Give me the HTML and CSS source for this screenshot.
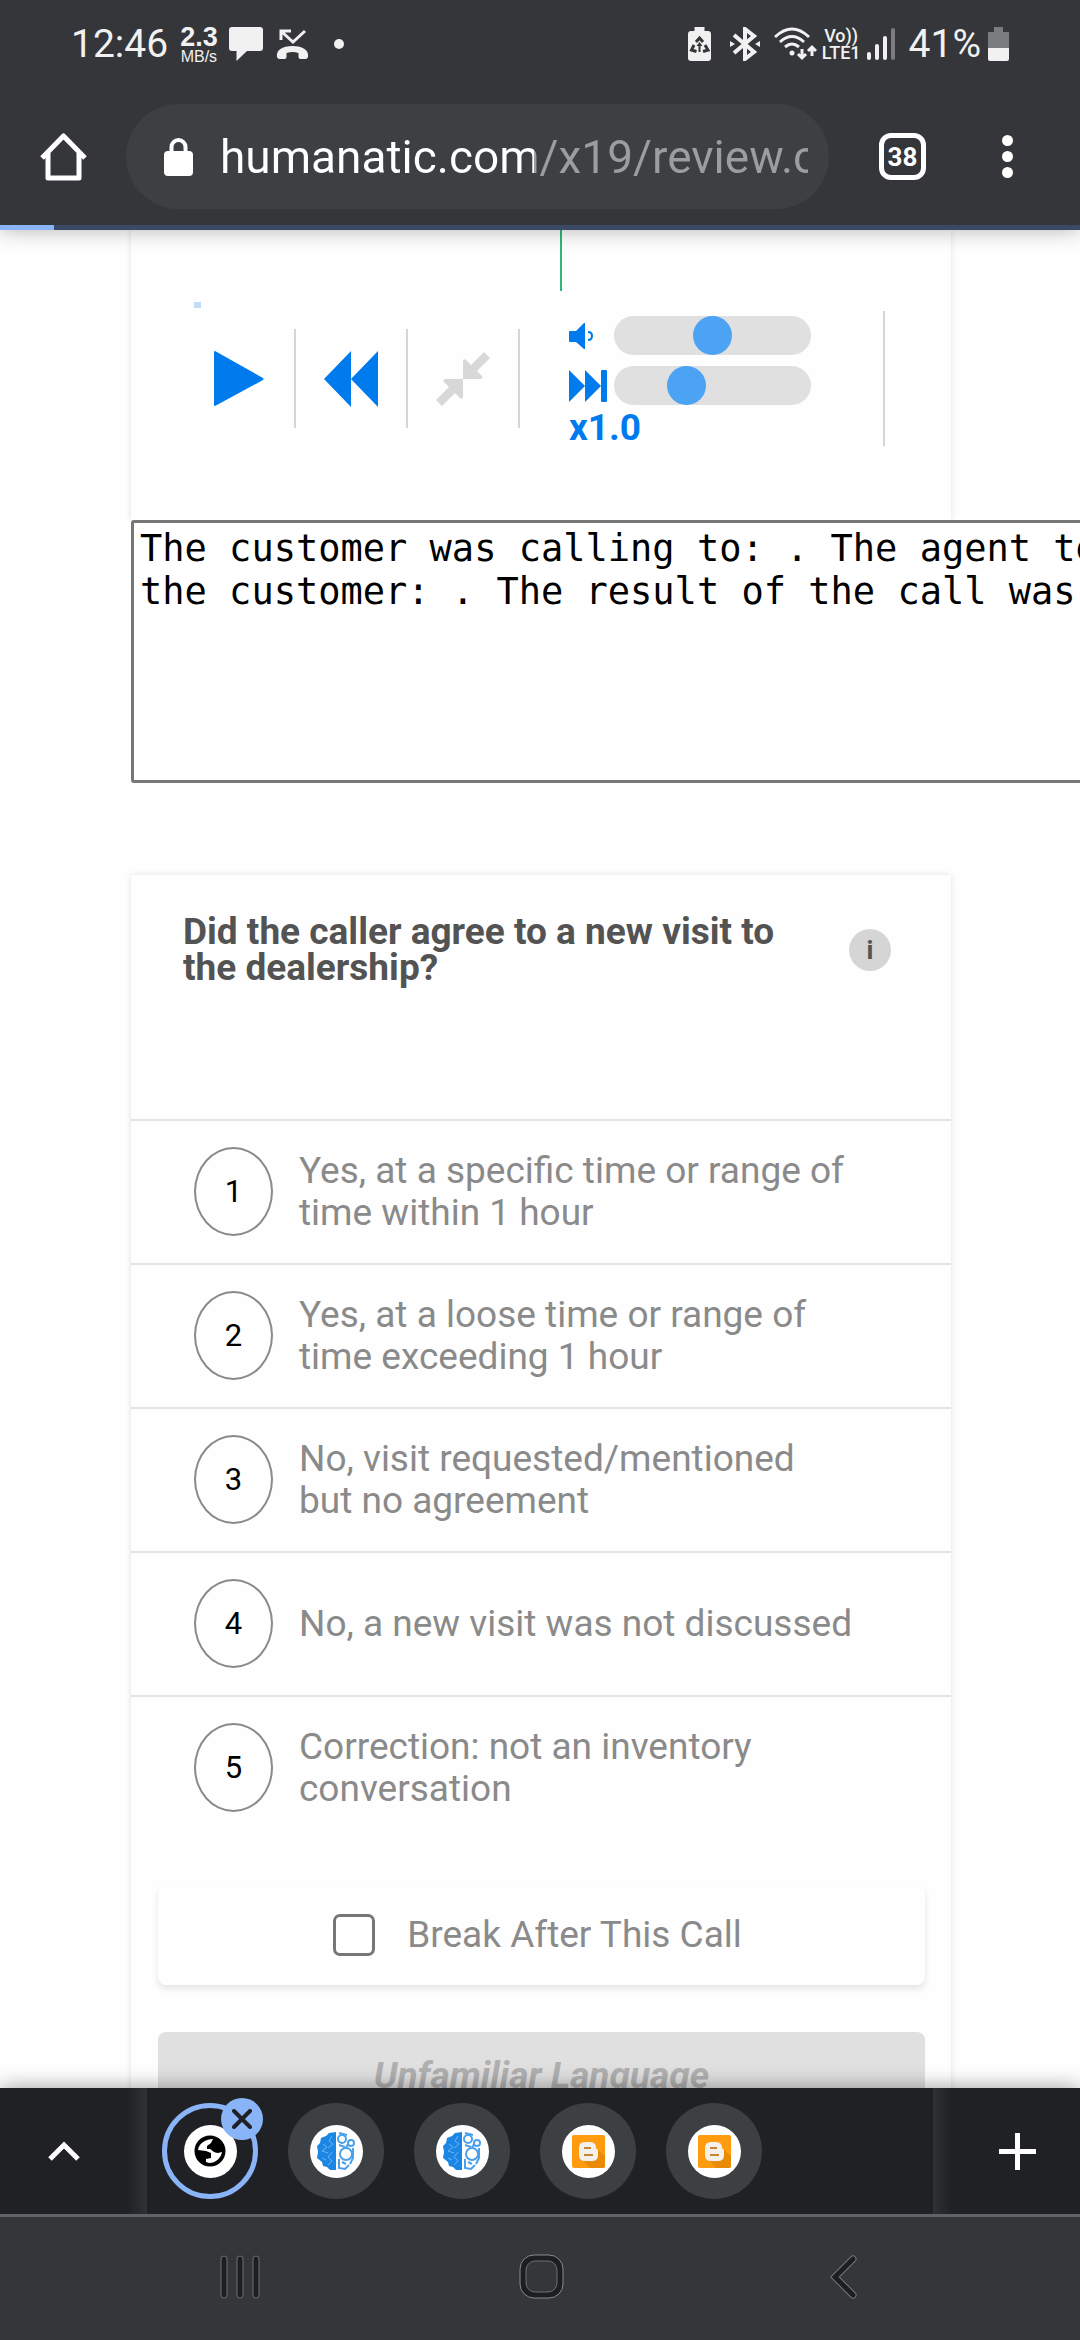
FILE: index.html
```html
<!DOCTYPE html>
<html lang="en">
<head>
  <meta charset="UTF-8" />
  <meta name="viewport" content="width=device-width, initial-scale=1.0"/>
  <title>Review - Humanatic</title>
  <link rel="stylesheet" href="styles.css">
</head>
<body>
  <header class="browser-top">
    <!-- Status bar -->
    <div class="status-bar">
      <span class="clock">12:46</span>
      <span class="net-speed"><b>2.3</b><span>MB/s</span></span>
      <svg class="icon-message" width="34" height="34" viewBox="0 0 34 34"><path fill="#f1f1f1" d="M3 0h28q3 0 3 3v18q0 3-3 3H18L7.500 34V24H3q-3 0-3-3V3q0-3 3-3z"/></svg>
      <svg class="icon-missed" width="33" height="32" viewBox="0 0 33 32"><path fill="none" stroke="#f1f1f1" stroke-width="3" d="M5 12V3h10M6 4l11 10L29 3"/><path fill="#f1f1f1" d="M1 29c-1-7 5-11 15.500-11S33 22 32 29q-.5 2-2.500 2h-5q-2 0-2-2v-4q-6-2-12 0v4q0 2-2 2h-5Q1.500 31 1 29z"/></svg>
      <span class="more-dot"></span>

      <span class="spacer"></span>

      <svg class="icon-saver" width="23" height="34" viewBox="0 0 23 34"><path fill="#f1f1f1" d="M6.500 0h10v4H20q3 0 3 3v24q0 3-3 3H3q-3 0-3-3V7q0-3 3-3h3.500z"/><g fill="none" stroke="#35363a" stroke-width="3"><path d="M8 15l3.500-4 3.500 4M17 18l3 5-5 1.500M6 18l-2.500 5 5 1.500"/></g><path fill="#35363a" d="M11.500 15l3 4h-2v6h-2v-6h-2z"/></svg>
      <svg class="icon-bluetooth" width="30" height="34" viewBox="0 0 30 34"><g fill="none" stroke="#f1f1f1" stroke-width="4"><path d="M4 8l20 17-9 7V2l9 7L4 26"/></g><path fill="#f1f1f1" d="M0 14l5 3-5 3zM30 14l-5 3 5 3z"/></svg>
      <svg class="icon-wifi" width="43" height="34" viewBox="0 0 43 34"><g fill="none" stroke="#f1f1f1" stroke-width="3"><path d="M1 10Q18-6 35 10M6 15q12-11 24 0M11 20q7-6 14 0"/><path d="M28 22v9M24 27l4 4 4-4M38 29v-9M34 24l4-4 4 4"/></g><circle cx="18" cy="26" r="2.500" fill="#f1f1f1"/></svg>
      <span class="volte"><span>Vo))</span><span>LTE1</span></span>
      <svg class="icon-signal" width="28" height="32" viewBox="0 0 28 32"><g fill="#f1f1f1"><rect y="24" width="4" height="8" rx="2"/><rect x="8" y="16" width="4" height="16" rx="2"/><rect x="16" y="8" width="4" height="24" rx="2"/></g><rect x="24" width="4" height="32" rx="2" fill="#7d7d80"/></svg>
      <span class="battery-level">41%</span>
      <svg class="icon-battery" width="21" height="34" viewBox="0 0 21 34"><path fill="#7b7c7f" d="M6 0h9v5h6v16H0V5h6z"/><path fill="#f1f1f1" d="M0 21h21v11q0 2-2 2H2q-2 0-2-2z"/></svg>
    </div>

    <!-- Address bar -->
    <div class="toolbar">
      <button type="button" class="home-btn" aria-label="Home">
        <svg width="47" height="48" viewBox="0 0 47 48"><path fill="none" stroke="#fff" stroke-width="5" stroke-linejoin="round" d="M2 25L23.500 3 45 25M8 20v25h31V20"/></svg>
      </button>
      <div class="omnibox">
        <svg width="29" height="38" viewBox="0 0 29 38"><rect y="13" width="29" height="25" rx="4" fill="#fff"/><path fill="none" stroke="#fff" stroke-width="4" d="M7.500 14V9a7 7 0 0 1 14 0v5"/></svg>
        <input type="text" class="address" aria-label="Address" value="humanatic.com/x19/review.cfm">
      </div>
      <button type="button" class="tab-count" aria-label="Open tabs">38</button>
      <button type="button" class="menu-btn" aria-label="Menu"><span></span><span></span><span></span></button>
    </div>
    <div class="load-bar"><div class="load-bar-fill"></div></div>
  </header>

  <main>
    <section class="player">
      <div class="waveform">
        <div class="cursor"></div>
        <div class="region"></div>
      </div>
      <div class="controls">
        <button type="button" class="control-btn" aria-label="Play">
          <svg width="50" height="56" viewBox="0 0 50 56"><path fill="#007bee" d="M0 1Q0 0 1 0l48 27q1 1 0 2L1 55q-1 0-1-1z"/></svg>
        </button>
        <button type="button" class="control-btn" aria-label="Rewind">
          <svg width="54" height="56" viewBox="0 0 54 56"><path fill="#007bee" d="M0 28L27 0v28L54 0v56L27 28v28z"/></svg>
        </button>
        <button type="button" class="control-btn" aria-label="Compress">
          <svg width="54" height="54" viewBox="0 0 54 54"><path fill="#d8d8d8" d="M27 27V10q0-4 3-2l5 5L48 0l6 6-13 13 5 5q2 3-2 3zM27 27v17q0 4-3 2l-5-5L6 54l-6-6 13-13-5-5q-2-3 2-3z"/></svg>
        </button>
        <div class="sliders">
          <label for="volume" aria-label="Volume"><svg width="25" height="26" viewBox="0 0 25 26"><path fill="#007bee" d="M0 9q0-1 1-1h6l8-8h1v26h-1l-8-7H1q-1 0-1-1z"/><path fill="none" stroke="#007bee" stroke-width="2" d="M19 9q4 0 4 4t-4 4"/></svg></label>
          <input type="range" id="volume" min="0" max="100" value="50">
          <label for="speed" aria-label="Speed"><svg width="38" height="32" viewBox="0 0 38 32"><path fill="#007bee" d="M0 0l16 16V0l16 16V1q0-1 1-1h4q1 0 1 1v30q0 1-1 1h-4q-1 0-1-1V16L16 32V16L0 32z"/></svg></label>
          <input type="range" id="speed" min="0.5" max="2" step="0.1" value="1">
          <output for="speed">x1.0</output>
        </div>
      </div>
    </section>

    <textarea class="summary" cols="48" aria-label="Call summary" wrap="off" spellcheck="false">The customer was calling to: . The agent tells
the customer: . The result of the call was: .</textarea>

    <section class="question">
      <div class="question-head">
        <h1>Did the caller agree to a new visit to the dealership?</h1>
        <button type="button" class="info-btn">i</button>
      </div>
      <button type="button" class="option"><span class="number">1</span><span class="answer">Yes, at a specific time or range of time within 1 hour</span></button>
      <button type="button" class="option"><span class="number">2</span><span class="answer">Yes, at a loose time or range of time exceeding 1 hour</span></button>
      <button type="button" class="option"><span class="number">3</span><span class="answer">No, visit requested/mentioned but no agreement</span></button>
      <button type="button" class="option"><span class="number">4</span><span class="answer">No, a new visit was not discussed</span></button>
      <button type="button" class="option"><span class="number">5</span><span class="answer">Correction: not an inventory conversation</span></button>

      <div class="break-box">
        <input type="checkbox" id="breakAfter">
        <label for="breakAfter">Break After This Call</label>
      </div>
      <button type="button" class="language-btn">Unfamiliar Language</button>
    </section>
  </main>

  <footer class="browser-bottom">
    <!-- Tab strip -->
    <div class="tab-strip">
      <button type="button" class="strip-btn expand" aria-label="Expand">
        <svg width="32" height="20" viewBox="0 0 32 20"><path fill="none" stroke="#fff" stroke-width="5" d="M2 18L16 4l14 14"/></svg>
      </button>
      <div class="tabs">
        <button type="button" class="tab active" aria-label="Current tab">
          <span class="favicon"><svg width="32" height="32" viewBox="-16 -16 32 32"><circle r="15.500"/><path fill="#fff" d="M3-12L1-8l-4 3v3h3c2 1 4 4 8 4l4-1C11 7 6 12-1 12l-3-1V8l5-1V2l-5-2-8-1C-11-8-4-12 3-12z"/></svg></span>
          <span class="close"><svg width="20" height="20" viewBox="0 0 20 20"><path stroke="#202124" stroke-width="4" stroke-linecap="round" d="M2 2l16 16M18 2L2 18"/></svg></span>
        </button>
        <button type="button" class="tab" aria-label="Humanatic tab">
          <span class="favicon"><svg width="38" height="38" viewBox="0 0 38 38"><path fill="#1c86e5" d="M19 0v38h-6l-3-3-4-1-1-4-5-4 1-6-1-6 3-3 1-5 5-2 3-3z"/><g fill="none" stroke="#6db3f2" stroke-width="1"><path d="M15 4l-3 5 4 3-5 4M6 12l4 3-5 4 6 2M15 20l-4 5 4 4-4 4M5 26l4 2"/></g><g fill="none" stroke="#4ba0ec" stroke-width="2"><circle cx="25" cy="7" r="4"/><circle cx="34" cy="11" r="3"/><circle cx="29" cy="22" r="6"/><path d="M22 1l8 2M22 13l6 2M31 12l-2 4M36 16v10l-3 6M22 27v9l6 1 4-4M25 30l4 2"/></g></svg></span>
        </button>
        <button type="button" class="tab" aria-label="Humanatic tab">
          <span class="favicon"><svg width="38" height="38" viewBox="0 0 38 38"><path fill="#1c86e5" d="M19 0v38h-6l-3-3-4-1-1-4-5-4 1-6-1-6 3-3 1-5 5-2 3-3z"/><g fill="none" stroke="#6db3f2" stroke-width="1"><path d="M15 4l-3 5 4 3-5 4M6 12l4 3-5 4 6 2M15 20l-4 5 4 4-4 4M5 26l4 2"/></g><g fill="none" stroke="#4ba0ec" stroke-width="2"><circle cx="25" cy="7" r="4"/><circle cx="34" cy="11" r="3"/><circle cx="29" cy="22" r="6"/><path d="M22 1l8 2M22 13l6 2M31 12l-2 4M36 16v10l-3 6M22 27v9l6 1 4-4M25 30l4 2"/></g></svg></span>
        </button>
        <button type="button" class="tab" aria-label="Blogger tab">
          <span class="favicon"><svg width="33" height="33" viewBox="0 0 33 33"><rect width="33" height="33" rx="2" fill="#ff9b0f"/><path fill="#e98b06" d="M12 26l6 7h13q2 0 2-2V21l-8-7z"/><path fill="#f4f1ec" d="M13 7h5q6 0 6 6 0 1 1 1 1 0 1 2v4q0 6-6 6h-7q-6 0-6-6v-7q0-6 6-6z"/><path stroke="#c98532" stroke-width="2" d="M12 13h7M12 20h9"/></svg></span>
        </button>
        <button type="button" class="tab" aria-label="Blogger tab">
          <span class="favicon"><svg width="33" height="33" viewBox="0 0 33 33"><rect width="33" height="33" rx="2" fill="#ff9b0f"/><path fill="#e98b06" d="M12 26l6 7h13q2 0 2-2V21l-8-7z"/><path fill="#f4f1ec" d="M13 7h5q6 0 6 6 0 1 1 1 1 0 1 2v4q0 6-6 6h-7q-6 0-6-6v-7q0-6 6-6z"/><path stroke="#c98532" stroke-width="2" d="M12 13h7M12 20h9"/></svg></span>
        </button>
      </div>
      <button type="button" class="strip-btn add" aria-label="New tab">
        <svg width="37" height="37" viewBox="0 0 37 37"><path stroke="#fff" stroke-width="5" d="M0 18.500h37M18.500 0v37"/></svg>
      </button>
    </div>

    <!-- System navigation -->
    <nav class="system-nav">
      <button type="button" aria-label="Recents"><svg width="40" height="44" viewBox="0 0 40 44"><g fill="#1d1e20" stroke="#6d6e71"><rect x="1" y="1" width="6" height="42" rx="3"/><rect x="17" y="1" width="6" height="42" rx="3"/><rect x="33" y="1" width="6" height="42" rx="3"/></g></svg></button>
      <button type="button" aria-label="Home"><svg width="45" height="45" viewBox="0 0 45 45"><rect x="1" y="1" width="43" height="43" rx="14" fill="#1d1e20" stroke="#8a8b8d"/><rect x="7" y="7" width="31" height="31" rx="9" fill="#35363a" stroke="#6d6e71"/></svg></button>
      <button type="button" aria-label="Back"><svg width="28" height="44" viewBox="0 0 28 44"><g fill="none" stroke-linecap="round"><path stroke="#77787b" stroke-width="7" d="M23 4L5 22l18 18"/><path stroke="#1d1e20" stroke-width="5" d="M23 4L5 22l18 18"/></g></svg></button>
    </nav>
  </footer>
</body>
</html>
```
FILE: styles.css
```css
* { box-sizing: border-box; }
body {
  margin: 0;
  font-family: Roboto, sans-serif;
  background: #fefefe;
  display: flex;
  flex-direction: column;
  height: 100vh;
  overflow: hidden;
}
button {
  padding: 0;
  border: none;
  background: none;
  font-family: inherit;
  color: inherit;
  cursor: pointer;
}
svg { display: block; }

/* Browser top */
.browser-top {
  position: relative;
  z-index: 1;
  background: #35363a;
  box-shadow: 0 0 20px rgba(0,0,0,0.3);
}
.status-bar {
  display: flex;
  align-items: center;
  height: 88px;
  padding: 0 71px;
  color: #f1f1f1;
  white-space: nowrap;
}
.clock, .battery-level { font-size: 39px; }
.net-speed {
  display: flex;
  flex-direction: column;
  align-items: center;
  margin: 0 11px 0 12px;
  font-family: "Liberation Sans", sans-serif;
  font-size: 16px;
  line-height: 15px;
}
.net-speed b {
  font-size: 27px;
  line-height: 24px;
}
.icon-missed { margin-left: 13px; }
.more-dot {
  width: 10px;
  height: 10px;
  margin-left: 25px;
  border-radius: 50%;
  background: #f1f1f1;
}
.spacer { flex: 1; }
.icon-bluetooth { margin-left: 19px; }
.icon-wifi { margin-left: 14px; }
.volte {
  display: flex;
  flex-direction: column;
  align-items: center;
  margin: 0 6px 0 5px;
  font-size: 18px;
  font-weight: 500;
  line-height: 17px;
}
.battery-level { margin: 0 7px 0 14px; }

.toolbar {
  display: flex;
  align-items: center;
  padding: 16px 67px 16px 40px;
}
.omnibox {
  flex: 1;
  display: flex;
  align-items: center;
  min-width: 0;
  height: 105px;
  margin: 0 50px 0 39px;
  padding: 0 21px 0 38px;
  border-radius: 53px;
  background: #3c4043;
}
.address {
  flex: 1;
  min-width: 0;
  margin-left: 27px;
  padding: 0;
  border: none;
  outline: none;
  font-family: inherit;
  font-size: 46px;
  /* host in white, path in grey */
  color: transparent;
  background: linear-gradient(90deg, #fff 314px, #9b9d9f 314px);
  -webkit-background-clip: text;
  background-clip: text;
}
.tab-count {
  width: 47px;
  height: 47px;
  border: 5px solid #fff;
  border-radius: 12px;
  color: #fff;
  font-size: 26px;
  font-weight: bold;
}
.menu-btn {
  display: flex;
  flex-direction: column;
  gap: 5px;
  margin-left: 76px;
}
.menu-btn span {
  width: 11px;
  height: 11px;
  border-radius: 50%;
  background: #fff;
}
.load-bar {
  height: 5px;
  background: #3a4964;
}
.load-bar-fill {
  width: 5%;
  height: 5px;
  background: #8ab4f8;
}

/* Page */
main {
  flex: 1;
  min-height: 0;
  overflow: hidden;
  padding: 0 129px 0 131px;
}
.player, .question {
  background: #fefefe;
  box-shadow: 0 0 6px rgba(0,0,0,0.12);
}
.player { padding-bottom: 74px; }
.waveform {
  position: relative;
  height: 81px;
}
.cursor {
  position: absolute;
  left: 429px;
  top: 0;
  width: 2px;
  height: 61px;
  background: #2fb875;
}
.region {
  position: absolute;
  left: 63px;
  top: 72px;
  width: 7px;
  height: 6px;
  background: #c1ddf8;
}
.controls {
  display: flex;
  align-items: center;
  padding-left: 53px;
}
.control-btn {
  display: flex;
  align-items: center;
  justify-content: center;
  width: 112px;
  height: 99px;
  border-right: 2px solid #d5d5d5;
}
.sliders {
  display: grid;
  grid-template-columns: 45px 197px;
  row-gap: 11px;
  align-items: center;
  padding: 5px 72px 0 49px;
  border-right: 2px solid #d5d5d5;
}
.sliders input {
  -webkit-appearance: none;
  appearance: none;
  width: 100%;
  height: 39px;
  margin: 0;
  border-radius: 20px;
  background: #e0e0e0;
}
.sliders input::-webkit-slider-thumb {
  -webkit-appearance: none;
  width: 39px;
  height: 39px;
  border-radius: 50%;
  background: #4da3f3;
}
.sliders output {
  grid-column: 1 / 3;
  margin-top: -6px;
  font-size: 37px;
  font-weight: bold;
  line-height: 36px;
  color: #007bee;
}
.summary {
  display: block;
  position: relative;
  height: 263px;
  padding: 4px 6px;
  border: 3px solid #767676;
  border-radius: 3px;
  background: #fff;
  color: #000;
  font-family: "DejaVu Sans Mono", monospace;
  font-size: 37px;
  line-height: 43px;
  resize: none;
  overflow: hidden;
}

/* Question card */
.question {
  margin-top: 92px;
  padding-bottom: 47px;
}
.question-head {
  display: flex;
  align-items: center;
  justify-content: space-between;
  gap: 50px;
  padding: 39px 60px 133px 52px;
}
h1 {
  margin: 0;
  font-size: 37px;
  line-height: 36px;
  color: #535353;
}
.info-btn {
  flex: none;
  width: 42px;
  height: 42px;
  border-radius: 50%;
  background: #d5d5d5;
  color: #535353;
  font-size: 26px;
  font-weight: bold;
}
.option {
  display: flex;
  align-items: center;
  gap: 26px;
  width: 100%;
  min-height: 144px;
  padding: 0 97px 1px 63px;
  border-top: 2px solid #e4e4e4;
  text-align: left;
}
.number {
  flex: none;
  width: 79px;
  border: 2px solid #8a8a8a;
  border-radius: 50%;
  font-size: 31px;
  line-height: 85px;
  text-align: center;
  color: #000;
}
.answer, .break-box label {
  font-size: 37px;
  line-height: 42px;
  color: #8a8a8a;
}
.break-box {
  display: flex;
  align-items: center;
  justify-content: center;
  gap: 32px;
  height: 100px;
  margin: 46px 26px 47px 27px;
  padding-right: 8px;
  border-radius: 8px;
  box-shadow: 0 4px 6px rgba(0,0,0,0.1);
}
.break-box input {
  -webkit-appearance: none;
  appearance: none;
  width: 42px;
  height: 42px;
  margin: 0;
  border: 3px solid #767676;
  border-radius: 7px;
  background: #fff;
}
.language-btn {
  display: block;
  width: calc(100% - 53px);
  margin: 0 26px 0 27px;
  padding: 26px;
  border-radius: 8px;
  background: #e0e0e0;
  color: #b0b0b0;
  font-size: 37px;
  font-style: italic;
  font-weight: bold;
  line-height: 36px;
}

/* Browser bottom */
.browser-bottom {
  position: relative;
  z-index: 1;
  background: #35363a;
  box-shadow: 0 0 20px rgba(0,0,0,0.4);
}
.tab-strip {
  display: flex;
  height: 129px;
  border-bottom: 3px solid #5f6368;
  background: #202124;
}
.strip-btn {
  display: flex;
  align-items: center;
  justify-content: center;
  width: 147px;
}
.expand {
  padding-right: 20px;
  background: linear-gradient(90deg, #202124 127px, #303135 147px);
}
.add {
  padding-right: 22px;
  padding-left: 44px;
  background: linear-gradient(270deg, #202124 128px, #303135 147px);
}
.tabs {
  flex: 1;
  display: flex;
  align-items: center;
  gap: 30px;
  padding-left: 15px;
}
.tab {
  position: relative;
  display: flex;
  align-items: center;
  justify-content: center;
  width: 96px;
  height: 96px;
  border-radius: 50%;
  background: #3c4043;
}
.tab.active {
  border: 5px solid #8ab4f8;
  background: none;
}
.favicon {
  display: flex;
  align-items: center;
  justify-content: center;
  width: 53px;
  height: 53px;
  border-radius: 50%;
  background: #fff;
}
.close {
  position: absolute;
  top: -10px;
  right: -10px;
  display: flex;
  align-items: center;
  justify-content: center;
  width: 42px;
  height: 42px;
  border-radius: 50%;
  background: #8ab4f8;
}
.system-nav {
  display: flex;
  justify-content: space-between;
  height: 123px;
  padding: 0 214px 4px 217px;
}
.system-nav button {
  display: flex;
  align-items: center;
  justify-content: center;
  width: 45px;
}
```
